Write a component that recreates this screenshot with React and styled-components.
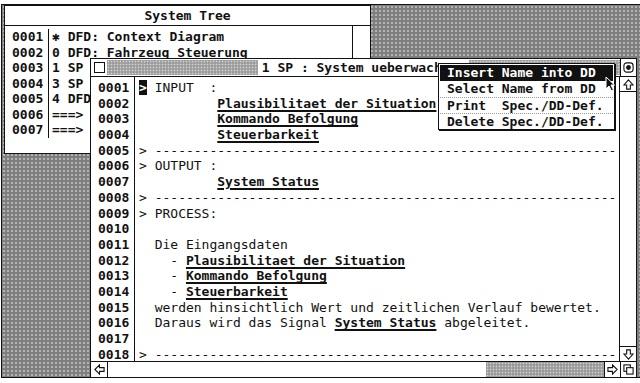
import React from "react";
import styled, { createGlobalStyle } from "styled-components";

const GlobalStyle = createGlobalStyle`
  html, body {
    margin: 0;
    padding: 0;
    background: #fff;
  }
  body {
    width: 640px;
    height: 383px;
    overflow: hidden;
    font-family: "DejaVu Sans Mono", "Liberation Mono", monospace;
    font-size: 13px;
    color: #111;
  }
`;

const Desktop = styled.div`
  position: relative;
  margin: 4px 0 0 1px;
  width: 639px;
  height: 374px;
  box-sizing: border-box;
  border: 1px solid #111;
  border-right: 0;
  background-color: #7e7e7e;
  background-image: radial-gradient(circle, #b4b4b4 0.8px, transparent 1.3px);
  background-size: 4px 4px;
`;

const Window = styled.div`
  position: absolute;
  left: ${(p) => p.$x}px;
  top: ${(p) => p.$y}px;
  width: ${(p) => p.$w}px;
  height: ${(p) => p.$h}px;
  box-sizing: border-box;
  border: 1px solid #111;
  background: #fff;
  display: flex;
  flex-direction: column;
`;

/* ---- back window: system tree ---- */

const PlainTitle = styled.div`
  height: 19px;
  line-height: 19px;
  border-bottom: 1px solid #111;
  text-align: center;
  font-weight: bold;
`;

const BackBody = styled.div`
  flex: 1;
  display: flex;
`;

const TreeArea = styled.div`
  flex: 1;
  padding-top: 3px;
`;

const TreeRow = styled.div`
  display: grid;
  grid-template-columns: 44px 1fr;
  height: 15.5px;
  line-height: 15.5px;
  white-space: pre;
`;

const TreeNum = styled.div`
  padding-left: 7px;
  border-right: 1px solid #111;
  font-weight: bold;
`;

const TreeText = styled.div`
  padding-left: 3px;
  font-weight: bold;
`;

const EmptyScroll = styled.div`
  width: 17px;
  border-left: 1px solid #111;
`;

/* ---- front window: editor ---- */

const TitleBar = styled.div`
  height: 17px;
  border-bottom: 1px solid #111;
  display: flex;
`;

const CloseBox = styled.div`
  width: 16px;
  display: flex;
  align-items: center;
  justify-content: center;
`;

const TitlePattern = styled.div`
  flex: 1;
  display: flex;
  align-items: center;
  justify-content: center;
  background-color: #9c9c9c;
  background-image: radial-gradient(circle, #d6d6d6 0.7px, transparent 1.1px);
  background-size: 3px 3px;
  margin: 1px 0;
`;

const TitleText = styled.span`
  background: #fff;
  padding: 0 4px;
  line-height: 15px;
  font-weight: bold;
  white-space: pre;
`;

const WidgetBox = styled.div`
  width: ${(p) => p.$w || 16}px;
  height: ${(p) => p.$h || 15}px;
  box-sizing: border-box;
  display: flex;
  align-items: center;
  justify-content: center;
  border-left: ${(p) => (p.$left ? "1px solid #111" : "0")};
  border-right: ${(p) => (p.$right ? "1px solid #111" : "0")};
  border-top: ${(p) => (p.$top ? "1px solid #111" : "0")};
  border-bottom: ${(p) => (p.$bottom ? "1px solid #111" : "0")};
  flex-shrink: 0;
`;

const EditBody = styled.div`
  height: 284px;
  display: flex;
  overflow: hidden;
`;

const NumColumn = styled.div`
  width: 44px;
  box-sizing: border-box;
  border-right: 1px solid #111;
  padding: 3px 0 0 7px;
  font-weight: bold;
`;

const TextColumn = styled.div`
  flex: 1;
  padding: 3px 0 0 4px;
  overflow: hidden;
`;

const Line = styled.div`
  height: 15.7px;
  line-height: 15.7px;
  white-space: pre;
`;

const CursorMark = styled.span`
  background: #111;
  color: #fff;
  font-weight: bold;
`;

const Name = styled.span`
  font-weight: bold;
  text-decoration: underline;
  text-decoration-thickness: 1.5px;
  text-underline-offset: 2px;
`;

const VScroll = styled.div`
  width: 16px;
  border-left: 1px solid #111;
  display: flex;
  flex-direction: column;
  justify-content: space-between;
`;

const HScroll = styled.div`
  height: 15px;
  border-top: 1px solid #111;
  display: flex;
`;

const HTrack = styled.div`
  flex: 1;
  display: flex;
  justify-content: flex-end;
`;

const HSlider = styled.div`
  width: 118px;
  background-color: #9a9a9a;
  background-image: radial-gradient(circle, #d2d2d2 0.7px, transparent 1.1px);
  background-size: 3px 3px;
`;

/* ---- popup menu ---- */

const Menu = styled.div`
  position: absolute;
  left: 436px;
  top: 58px;
  width: 177px;
  box-sizing: border-box;
  border: 1px solid #111;
  box-shadow: 1px 1px 0 #111;
  background: #fff;
  padding: 1px 1px 0;
`;

const MenuItem = styled.div`
  height: 16px;
  line-height: 16px;
  padding-left: 7px;
  white-space: pre;
  font-weight: bold;
  background: ${(p) => (p.$active ? "#111" : "#fff")};
  color: ${(p) => (p.$active ? "#fff" : "#111")};
  border-top: ${(p) => (p.$sep ? "1px dotted #9a9a9a" : "0")};
  box-sizing: border-box;
`;

const Pointer = styled.svg`
  position: absolute;
  left: 603px;
  top: 71px;
`;

/* ---- icons ---- */

const Icon = ({ children, size = 11 }) => (
  <svg width={size} height={size} viewBox="0 0 12 12" fill="none" stroke="#111" strokeWidth="1.2">
    {children}
  </svg>
);

const UpArrow = () => (
  <Icon>
    <polygon points="6,1 11,6.5 8,6.5 8,11 4,11 4,6.5 1,6.5" />
  </Icon>
);
const DownArrow = () => (
  <Icon>
    <polygon points="6,11 11,5.5 8,5.5 8,1 4,1 4,5.5 1,5.5" />
  </Icon>
);
const LeftArrow = () => (
  <Icon>
    <polygon points="1,6 6,1 6,4 11,4 11,8 6,8 6,11" />
  </Icon>
);
const RightArrow = () => (
  <Icon>
    <polygon points="11,6 6,1 6,4 1,4 1,8 6,8 6,11" />
  </Icon>
);
const Fuller = () => (
  <Icon>
    <rect x="1" y="1" width="10" height="10" rx="3" />
    <circle cx="6" cy="6" r="2" fill="#111" />
  </Icon>
);
const Sizer = () => (
  <Icon>
    <rect x="1" y="1" width="7" height="7" />
    <rect x="4" y="4" width="7" height="7" fill="#fff" />
  </Icon>
);

const tree = [
  ["0001", "✱ DFD: Context Diagram"],
  ["0002", "0 DFD: Fahrzeug Steuerung"],
  ["0003", "1 SP"],
  ["0004", "3 SP"],
  ["0005", "4 DFD"],
  ["0006", "===>"],
  ["0007", "===>"],
];

const dashes = "> " + "-".repeat(59);
const indent = "          ";

export default function App() {
  const nums = Array.from({ length: 18 }, (_, i) => String(i + 1).padStart(4, "0"));
  return (
    <>
      <GlobalStyle />
      <Desktop>
        <Window $x={2} $y={0} $w={367} $h={149}>
          <PlainTitle>System Tree</PlainTitle>
          <BackBody>
            <TreeArea>
              {tree.map(([n, t]) => (
                <TreeRow key={n}>
                  <TreeNum>{n}</TreeNum>
                  <TreeText>{t}</TreeText>
                </TreeRow>
              ))}
            </TreeArea>
            <EmptyScroll />
          </BackBody>
        </Window>

        <Window $x={88} $y={53} $w={547} $h={320}>
          <TitleBar>
            <CloseBox>
              <svg width="11" height="11" viewBox="0 0 11 11">
                <rect x="0.5" y="0.5" width="10" height="10" fill="#fff" stroke="#111" />
              </svg>
            </CloseBox>
            <TitlePattern>
              <TitleText>1 SP : System ueberwachung</TitleText>
            </TitlePattern>
            <WidgetBox $left $h={17}>
              <Fuller />
            </WidgetBox>
          </TitleBar>
          <EditBody>
            <NumColumn>
              {nums.map((n) => (
                <Line key={n}>{n}</Line>
              ))}
            </NumColumn>
            <TextColumn>
              <Line>
                <CursorMark>&gt;</CursorMark> INPUT  :
              </Line>
              <Line>
                {indent}
                <Name>Plausibilitaet der Situation</Name>
              </Line>
              <Line>
                {indent}
                <Name>Kommando Befolgung</Name>
              </Line>
              <Line>
                {indent}
                <Name>Steuerbarkeit</Name>
              </Line>
              <Line>{dashes}</Line>
              <Line>&gt; OUTPUT :</Line>
              <Line>
                {indent}
                <Name>System Status</Name>
              </Line>
              <Line>{dashes}</Line>
              <Line>&gt; PROCESS:</Line>
              <Line />
              <Line>{"  Die Eingangsdaten"}</Line>
              <Line>
                {"    - "}
                <Name>Plausibilitaet der Situation</Name>
              </Line>
              <Line>
                {"    - "}
                <Name>Kommando Befolgung</Name>
              </Line>
              <Line>
                {"    - "}
                <Name>Steuerbarkeit</Name>
              </Line>
              <Line>{"  werden hinsichtlich Wert und zeitlichen Verlauf bewertet."}</Line>
              <Line>
                {"  Daraus wird das Signal "}
                <Name>System Status</Name>
                {" abgeleitet."}
              </Line>
              <Line />
              <Line>{dashes}</Line>
            </TextColumn>
            <VScroll>
              <WidgetBox $bottom>
                <UpArrow />
              </WidgetBox>
              <WidgetBox $top>
                <DownArrow />
              </WidgetBox>
            </VScroll>
          </EditBody>
          <HScroll>
            <WidgetBox $right $w={17}>
              <LeftArrow />
            </WidgetBox>
            <HTrack>
              <HSlider />
            </HTrack>
            <WidgetBox $left>
              <RightArrow />
            </WidgetBox>
            <WidgetBox $left>
              <Sizer />
            </WidgetBox>
          </HScroll>
        </Window>

        <Menu>
          <MenuItem $active>Insert Name into DD</MenuItem>
          <MenuItem>Select Name from DD</MenuItem>
          <MenuItem $sep>Print  Spec./DD-Def.</MenuItem>
          <MenuItem $sep>Delete Spec./DD-Def.</MenuItem>
        </Menu>

        <Pointer width="10" height="16" viewBox="0 0 10 16">
          <path d="M1 1 L1 13 L4 10 L6.5 15 L8.5 14 L6 9 L9.5 9 Z" fill="#111" stroke="#fff" strokeWidth="1" />
        </Pointer>
      </Desktop>
    </>
  );
}
